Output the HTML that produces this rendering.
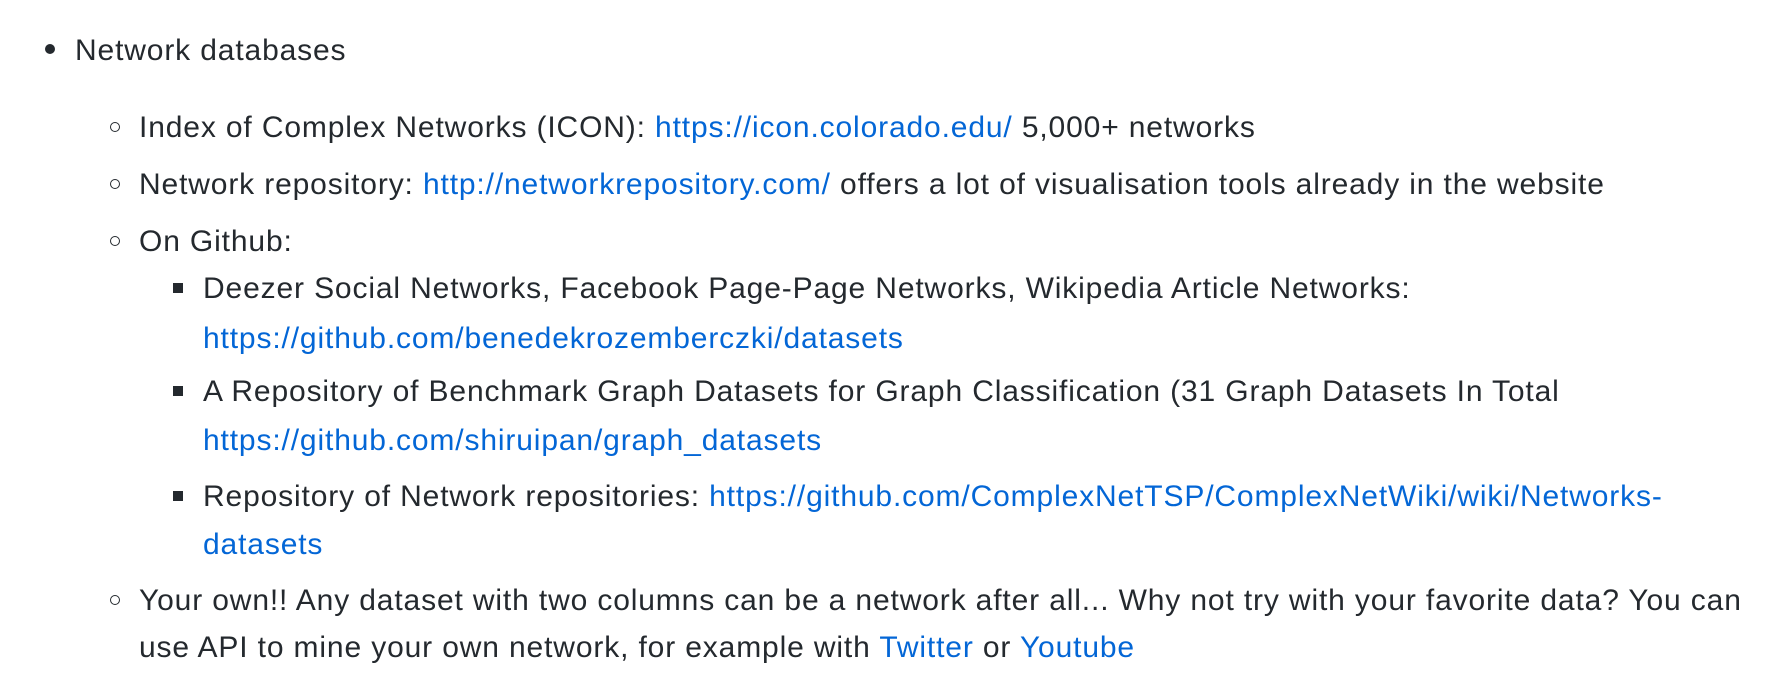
<!DOCTYPE html>
<html><head><meta charset="utf-8"><style>
body{margin:0;width:1785px;height:700px;background:#fff;overflow:hidden;font-family:"Liberation Sans",sans-serif;font-size:30px;letter-spacing:0.86px;color:#24292e}
.l{position:absolute;line-height:50px;height:50px;white-space:nowrap}
a{color:#0366d6;text-decoration:none}
.b{position:absolute;}
.dot{width:10px;height:10px;border-radius:50%;background:#24292e}
.circ{width:10px;height:10px;border-radius:50%;border:1.5px solid #24292e;box-sizing:border-box}
.sq{width:10px;height:10px;background:#24292e}
</style></head><body>
<div class="b dot" style="left:45px;top:44px"></div>
<div class="l" style="left:75px;top:26px">Network databases</div>

<div class="b circ" style="left:110px;top:122px"></div>
<div class="l" style="left:139px;top:103px">Index of Complex Networks (ICON): <a>https://icon.colorado.edu/</a> 5,000+ networks</div>
<div class="b circ" style="left:110px;top:179px"></div>
<div class="l" style="left:139px;top:160px">Network repository: <a>http://networkrepository.com/</a> offers a lot of visualisation tools already in the website</div>
<div class="b circ" style="left:110px;top:236px"></div>
<div class="l" style="left:139px;top:217px">On Github:</div>

<div class="b sq" style="left:173px;top:283px"></div>
<div class="l" style="left:203px;top:264px">Deezer Social Networks, Facebook Page-Page Networks, Wikipedia Article Networks:</div>
<div class="l" style="left:203px;top:314px"><a>https://github.com/benedekrozemberczki/datasets</a></div>
<div class="b sq" style="left:173px;top:386px"></div>
<div class="l" style="left:203px;top:367px">A Repository of Benchmark Graph Datasets for Graph Classification (31 Graph Datasets In Total</div>
<div class="l" style="left:203px;top:416px"><a>https://github.com/shiruipan/graph_datasets</a></div>
<div class="b sq" style="left:173px;top:491px"></div>
<div class="l" style="left:203px;top:472px">Repository of Network repositories: <a>https://github.com/ComplexNetTSP/ComplexNetWiki/wiki/Networks-</a></div>
<div class="l" style="left:203px;top:520px"><a>datasets</a></div>

<div class="b circ" style="left:110px;top:595px"></div>
<div class="l" style="left:139px;top:576px">Your own!! Any dataset with two columns can be a network after all... Why not try with your favorite data? You can</div>
<div class="l" style="left:139px;top:623px">use API to mine your own network, for example with <a>Twitter</a> or <a>Youtube</a></div>
</body></html>
